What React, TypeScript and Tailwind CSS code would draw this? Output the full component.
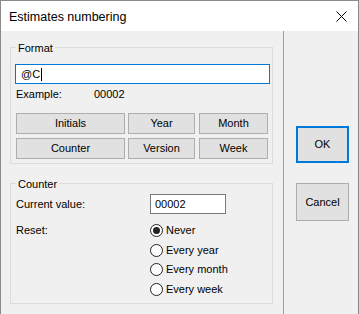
import React from "react";

const Btn = ({ label, className }: { label: string; className: string }) => (
  <div
    className={`h-[21px] flex items-center justify-center bg-[#e1e1e1] border border-[#adadad] ${className}`}
  >
    {label}
  </div>
);

const Radio = ({ label, checked }: { label: string; checked?: boolean }) => (
  <div className="h-[19.5px] flex items-center">
    <div className="w-[13px] h-[13px] rounded-full border border-[#222] bg-white flex items-center justify-center">
      {checked && <div className="w-[7px] h-[7px] rounded-full bg-[#222]" />}
    </div>
    <span className="ml-[3px] leading-[13px]">{label}</span>
  </div>
);

const GroupBox = ({
  title,
  className,
  children,
}: {
  title: string;
  className: string;
  children: React.ReactNode;
}) => (
  <div className={`relative ml-[9px] w-[263px] border border-[#dcdcdc] ${className}`}>
    <span className="absolute left-[5px] top-[-6px] px-[2px] leading-[13px] bg-[#f0f0f0]">
      {title}
    </span>
    {children}
  </div>
);

export default function App() {
  return (
    <div className="w-[359px] h-[314px] flex flex-col bg-[#f0f0f0] border-t border-l border-r border-[#8a8a8a] text-[11px] text-black font-['Liberation_Sans',Arial,sans-serif]">
      <div className="h-[30px] bg-white flex items-center justify-between pl-[8px] pr-[11px]">
        <span className="text-[12.5px] leading-[16px] mt-[1px]">Estimates numbering</span>
        <svg width="11" height="11" viewBox="0 0 11 11">
          <path d="M0.5 0.5 L10.5 10.5 M10.5 0.5 L0.5 10.5" stroke="#000" strokeWidth="1" />
        </svg>
      </div>

      <div className="flex flex-1">
        <div className="w-[282px] flex flex-col">
          <GroupBox title="Format" className="mt-[16px] h-[117px]">
            <div className="ml-[4px] mt-[16px] w-[255px] h-[20px] border border-[#0078d7] bg-white flex items-center px-[5px]">
              <span className="leading-[13px]">@C</span>
              <span className="ml-[1px] w-px h-[13px] bg-black" />
            </div>
            <div className="flex mt-[4px] ml-[5px] leading-[13px]">
              <span className="w-[78px]">Example:</span>
              <span>00002</span>
            </div>
            <div className="flex ml-[5px] mt-[12px]">
              <Btn label="Initials" className="w-[109px]" />
              <Btn label="Year" className="w-[67px] ml-[3px]" />
              <Btn label="Month" className="w-[69px] ml-[4px]" />
            </div>
            <div className="flex ml-[5px] mt-[4px]">
              <Btn label="Counter" className="w-[109px]" />
              <Btn label="Version" className="w-[67px] ml-[3px]" />
              <Btn label="Week" className="w-[69px] ml-[4px]" />
            </div>
          </GroupBox>

          <GroupBox title="Counter" className="mt-[19px] h-[121px]">
            <div className="flex items-center mt-[10px] ml-[5px]">
              <span className="w-[134px] leading-[13px]">Current value:</span>
              <div className="w-[76px] h-[20px] border border-[#7a7a7a] bg-white flex items-center px-[4px] leading-[13px]">
                00002
              </div>
            </div>
            <div className="flex mt-[7px] ml-[5px]">
              <span className="w-[134px] leading-[13px] mt-[3px]">Reset:</span>
              <div className="flex flex-col">
                <Radio label="Never" checked />
                <Radio label="Every year" />
                <Radio label="Every month" />
                <Radio label="Every week" />
              </div>
            </div>
          </GroupBox>
        </div>

        <div className="w-px bg-[#a0a0a0]" />

        <div className="flex-1 flex flex-col pl-[12px]">
          <div className="mt-[95px] w-[53px] h-[37px] border-2 border-[#0078d7] bg-[#e1e1e1] flex items-center justify-center">
            OK
          </div>
          <div className="mt-[20px] w-[53px] h-[38px] border border-[#adadad] bg-[#e1e1e1] flex items-center justify-center">
            Cancel
          </div>
        </div>
      </div>
    </div>
  );
}
